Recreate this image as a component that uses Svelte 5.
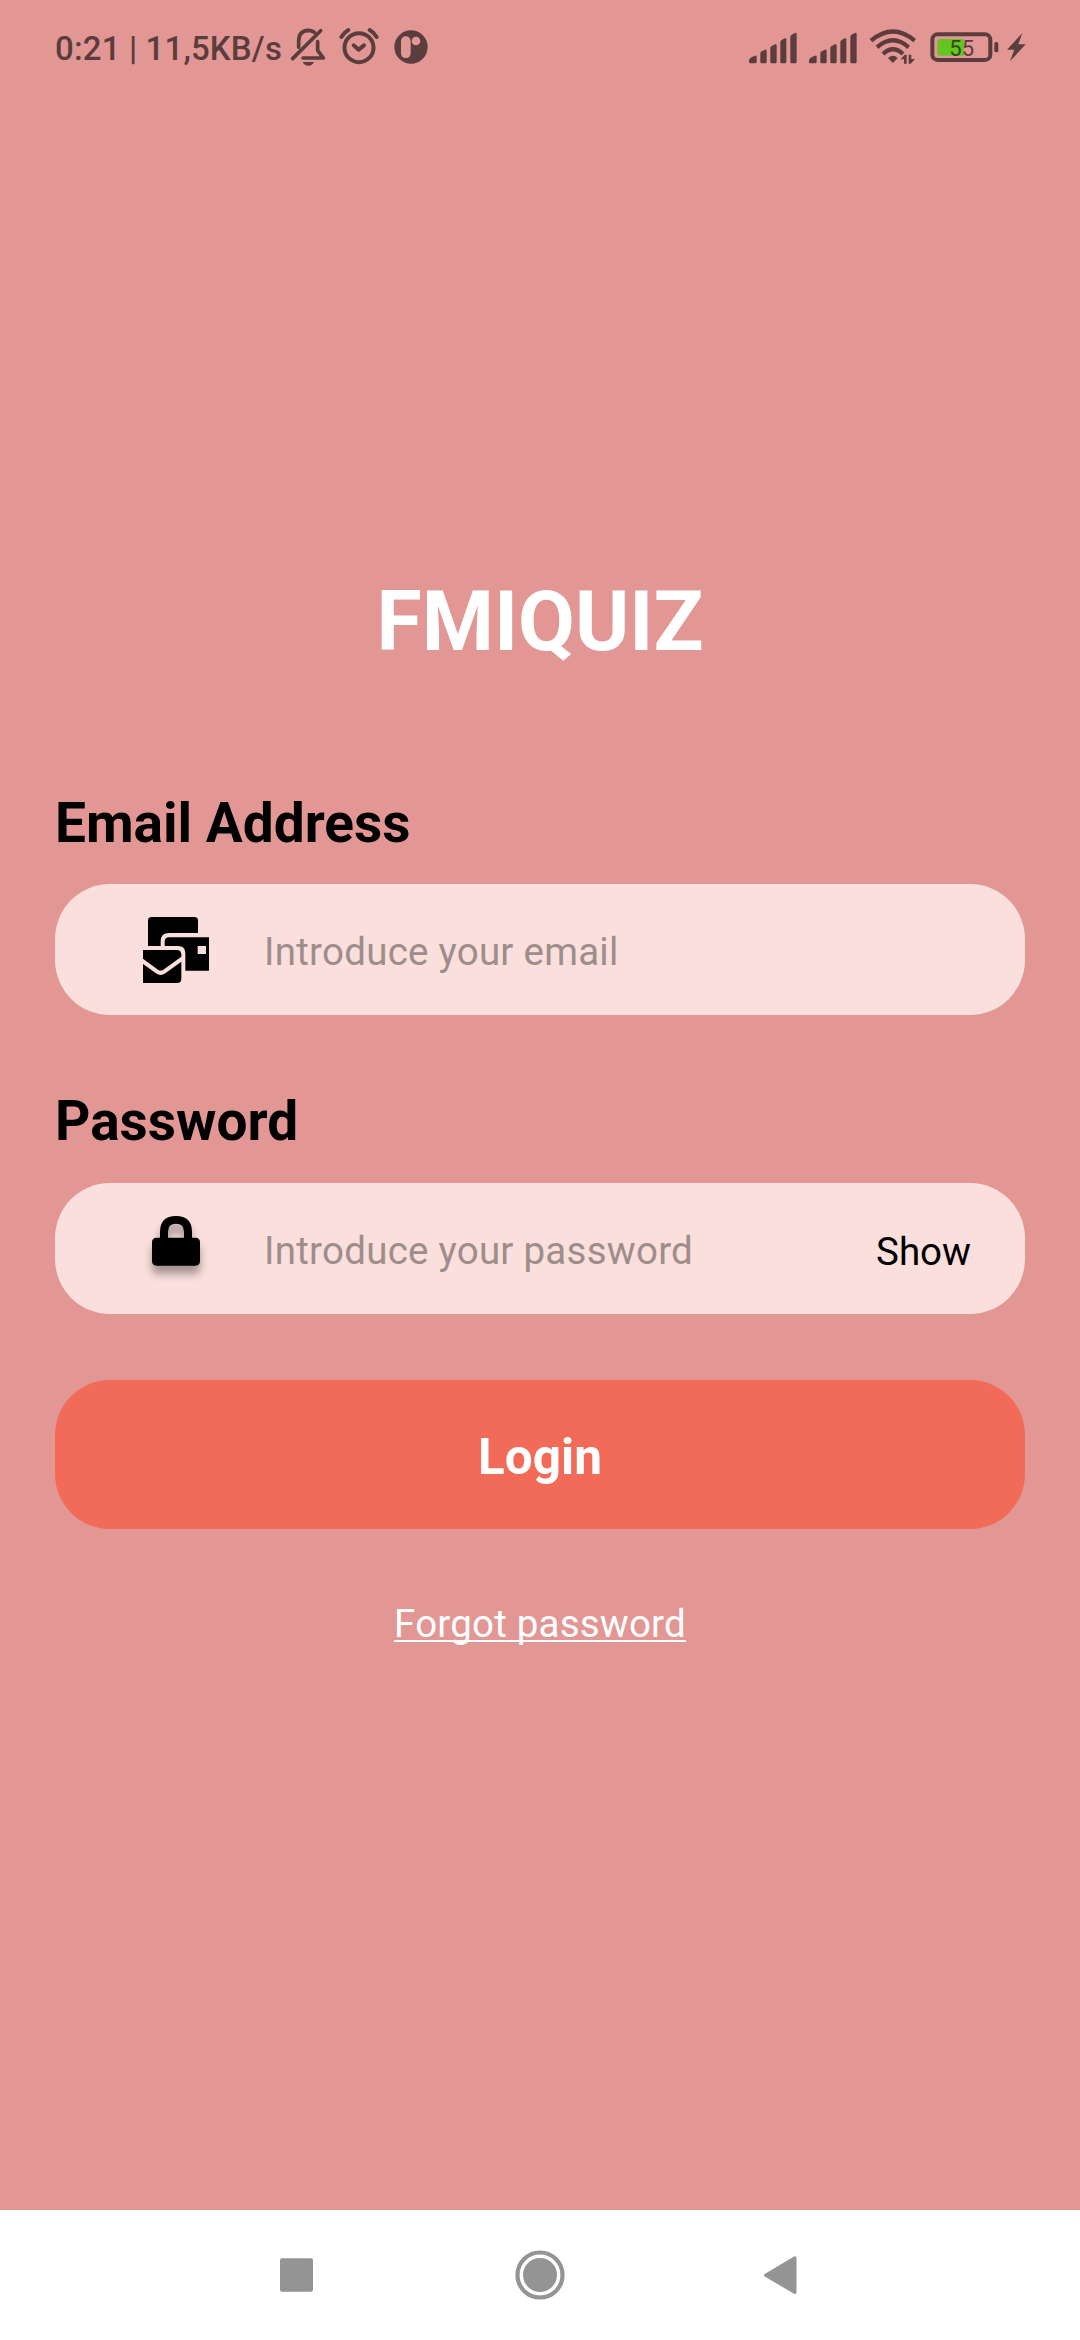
<script>
  let email = $state('');
  let password = $state('');
  let visible = $state(false);
</script>

<div class="screen">
  <header class="status">
    <div class="left">
      <span class="clock">0:21 | 11,5KB/s</span>
      <svg class="bell" viewBox="750 38 110 120" fill="none" stroke="currentColor" stroke-width="11" stroke-linecap="round" stroke-linejoin="round">
        <path d="M758 133 L842 49" />
        <path d="M776 99 V80 Q776 50 804 48 Q815 48 823 54" />
        <path d="M833 82 V108 L850 131 H789" />
        <path d="M788 143 H822 Q817 154 805 154 Q793 154 788 143Z" fill="currentColor" stroke="none" />
      </svg>
      <svg class="alarm" viewBox="895 38 126 120" fill="none" stroke="currentColor" stroke-width="12" stroke-linecap="round" stroke-linejoin="round">
        <circle cx="958" cy="100" r="43.500" />
        <path d="M942 93 L957 106 L973 93" />
        <path d="M905 68 Q913 54 926 47 M990 47 Q1003 54 1011 68" />
      </svg>
      <svg class="badge" viewBox="1062 45 102 102">
        <circle cx="1113" cy="96" r="50" fill="currentColor" />
        <rect class="cut" x="1083" y="64" width="29" height="65" rx="14" />
        <circle class="cut" cx="1128" cy="78" r="13" />
      </svg>
    </div>
    <div class="right">
      {#each [0, 1] as sim (sim)}
        <svg class="signal" viewBox="54 50 144 96" fill="currentColor">
          <path d="M54 143 V135 Q55 130 61 126 L72 121 Q77 119 77 124 V139 Q77 144 72 144 H58 Q54 144 54 140Z" />
          <path d="M88 140 V114 Q88 110 92 108 L102 103 Q107 101 107 106 V140 Q107 144 103 144 H92 Q88 144 88 140Z" />
          <path d="M118 140 V98 Q118 94 122 92 L132 87 Q137 85 137 90 V140 Q137 144 133 144 H122 Q118 144 118 140Z" />
          <path d="M148 140 V81 Q148 77 152 74 L161 69 Q166 67 166 72 V140 Q166 144 162 144 H152 Q148 144 148 140Z" />
          <path d="M178 140 V65 Q178 61 182 58 L192 53 Q197 51 197 56 V140 Q197 144 193 144 H182 Q178 144 178 140Z" />
        </svg>
      {/each}
      <svg class="wifi" viewBox="414 42 144 112" fill="none" stroke="currentColor">
        <path d="M420 80 Q486 25 551 80" stroke-width="13" />
        <path d="M438 100 Q486 58 533 100" stroke-width="13" />
        <path d="M456 120 Q486 92 516 120" stroke-width="13" />
        <path d="M471 132 Q486 119 500 132 L488 145 Q486 147 483 145Z" fill="currentColor" stroke="none" />
        <path d="M509 136 L521 122 H527 V149 H519 V136Z M533 122 H541 V135 H552 L539 149 H533Z" fill="currentColor" stroke="none" />
      </svg>
      <svg class="battery" viewBox="599 50 208 92">
        <rect x="606" y="57" width="174" height="77" rx="16" fill="none" stroke="currentColor" stroke-width="12" />
        <path d="M630 71 H701 V121 H630 Q621 121 621 112 V80 Q621 71 630 71Z" fill="#63c422" />
        <rect x="792" y="80" width="12" height="31" rx="5" fill="currentColor" />
        <text class="level" x="694" y="122" text-anchor="middle"><tspan class="over">5</tspan>5</text>
      </svg>
      <svg class="bolt" viewBox="826 50 60 90" fill="currentColor">
        <path d="M875 53 L829 103 H851 L838 138 L885 87 H863Z" />
      </svg>
    </div>
  </header>

  <main>
    <h1>FMIQUIZ</h1>

    <label for="email">Email Address</label>
    <div class="field">
      <div class="icon">
        <svg class="mail" viewBox="69 81 198 198">
          <path d="M84 168 V92 Q84 81 95 81 H223 Q234 81 234 92 V129 H147 Q122 129 122 154 V168Z" />
          <path fill-rule="evenodd" d="M134 168 V155 Q134 142 148 142 H267 V242 H196 V190 Q196 168 174 168Z M233 168 V192 H258 V168Z" />
          <path d="M69 180 H171 Q183 180 184 193 V200 L130 239 Q122 244 114 239 L69 206Z" />
          <path d="M69 222 L108 250 Q122 260 136 250 L184 215 V266 Q184 279 171 279 H69Z" />
        </svg>
      </div>
      <input id="email" type="text" placeholder="Introduce your email" bind:value={email} />
    </div>

    <label for="password">Password</label>
    <div class="field">
      <div class="icon">
        <svg class="lock" viewBox="96 78 144 149">
          <path fill-rule="evenodd" d="M120 143 V126 Q120 78 168 78 Q216 78 216 126 V143 H226 Q240 143 240 157 V213 Q240 227 226 227 H110 Q96 227 96 213 V157 Q96 143 110 143Z M144 143 H192 V126 Q192 101 168 101 Q144 101 144 126Z" />
        </svg>
      </div>
      <input id="password" type={visible ? 'text' : 'password'} placeholder="Introduce your password" bind:value={password} />
      <button class="show" onclick={() => (visible = !visible)}>Show</button>
    </div>

    <button class="login">Login</button>
    <a class="forgot" href="#forgot">Forgot password</a>
  </main>

  <nav>
    <svg viewBox="0 0 50 50"><rect x="9" y="8.300" width="33" height="33.500" rx="2" /></svg>
    <svg viewBox="0 0 50 50"><circle cx="25" cy="25" r="22.500" fill="none" stroke="#949494" stroke-width="4.200" /><circle cx="25" cy="25" r="17" /></svg>
    <svg viewBox="3.500 0 50 50"><path d="M10 23.500 L38.500 6.500 Q41 5.500 41 8.500 V42 Q41 45 38.500 43.700 L10 27 Q7 25.200 10 23.500Z" /></svg>
  </nav>
</div>

<style>
  :global(body) {
    margin: 0;
  }
  .screen {
    display: flex;
    flex-direction: column;
    width: 1080px;
    height: 2340px;
    background: #e29795;
    font-family: Roboto, sans-serif;
    overflow: hidden;
  }
  svg {
    display: block;
    flex: none;
  }
  .status {
    display: flex;
    justify-content: space-between;
    box-sizing: border-box;
    height: 94px;
    padding: 0 54px 0 55px;
    color: #5c3d3d;
  }
  .left,
  .right {
    display: flex;
    align-items: center;
    height: 94px;
  }
  .clock {
    width: 235px;
    padding-top: 3px;
    font-size: 33px;
    font-weight: 500;
    letter-spacing: 0.150px;
    line-height: 40px;
    white-space: nowrap;
  }
  .bell {
    width: 36.670px;
    height: 40px;
  }
  .alarm {
    width: 42px;
    height: 40px;
    margin-left: 11.670px;
  }
  .badge {
    width: 34px;
    height: 34px;
    margin-left: 13.670px;
  }
  .cut {
    fill: #e29795;
  }
  .signal {
    width: 48px;
    height: 32px;
    margin: 2px 12px 0 0;
  }
  .wifi {
    width: 48px;
    height: 37.330px;
  }
  .battery {
    width: 69.330px;
    height: 30.670px;
    margin-left: 13.670px;
  }
  .level {
    fill: #5c3d3d;
    font-size: 66px;
    font-weight: 400;
  }
  .over {
    fill: #2f4a12;
  }
  .bolt {
    width: 20px;
    height: 30px;
    margin-left: 6.330px;
  }
  main {
    display: flex;
    flex: 1;
    flex-direction: column;
    padding: 480px 55px 0;
  }
  h1 {
    margin: 0 0 121px;
    color: #fff;
    font-size: 82.500px;
    font-weight: 700;
    line-height: 96px;
    text-align: center;
  }
  label {
    height: 64px;
    color: #000;
    font-size: 55px;
    font-weight: 700;
    line-height: 64px;
  }
  .field {
    display: flex;
    align-items: center;
    box-sizing: border-box;
    height: 131px;
    margin: 29px 0 74px;
    padding-right: 54px;
    border-radius: 55px;
    background: #fadfdc;
  }
  label[for='password'] + .field {
    margin: 30px 0 66px;
  }
  .icon {
    display: flex;
    flex: none;
    justify-content: center;
    width: 242px;
    margin-right: -33px;
  }
  .mail {
    width: 66px;
    height: 66px;
  }
  .lock {
    width: 48px;
    height: 49.670px;
    margin-bottom: 15px;
    overflow: visible;
    filter: drop-shadow(0 8px 4px rgba(0, 0, 0, 0.35));
  }
  input {
    flex: 1;
    min-width: 0;
    padding: 3px 0 0;
    border: 0;
    outline: 0;
    background: none;
    font: 400 38.500px/45px Roboto, sans-serif;
    letter-spacing: 0.250px;
    color: #000;
  }
  input::placeholder {
    color: #9e8d8a;
    opacity: 1;
  }
  button {
    border: 0;
    font-family: inherit;
  }
  .show {
    padding: 5px 0 0;
    background: none;
    color: #000;
    font-size: 38.500px;
    line-height: 45px;
  }
  .login {
    height: 149px;
    padding: 4px 0 0;
    border-radius: 55px;
    background: #f26a58;
    color: #fff;
    font-size: 49.500px;
    font-weight: 700;
  }
  .forgot {
    align-self: center;
    margin-top: 72px;
    color: #fff;
    font-size: 38.500px;
    letter-spacing: 0.200px;
    line-height: 45px;
    text-decoration: underline;
    text-decoration-skip-ink: none;
    text-decoration-thickness: 2px;
    text-underline-offset: 3px;
  }
  nav {
    display: flex;
    align-items: center;
    justify-content: center;
    gap: 194px;
    height: 130px;
    background: #fff;
    fill: #949494;
  }
  nav svg {
    width: 50px;
    height: 50px;
  }
</style>
